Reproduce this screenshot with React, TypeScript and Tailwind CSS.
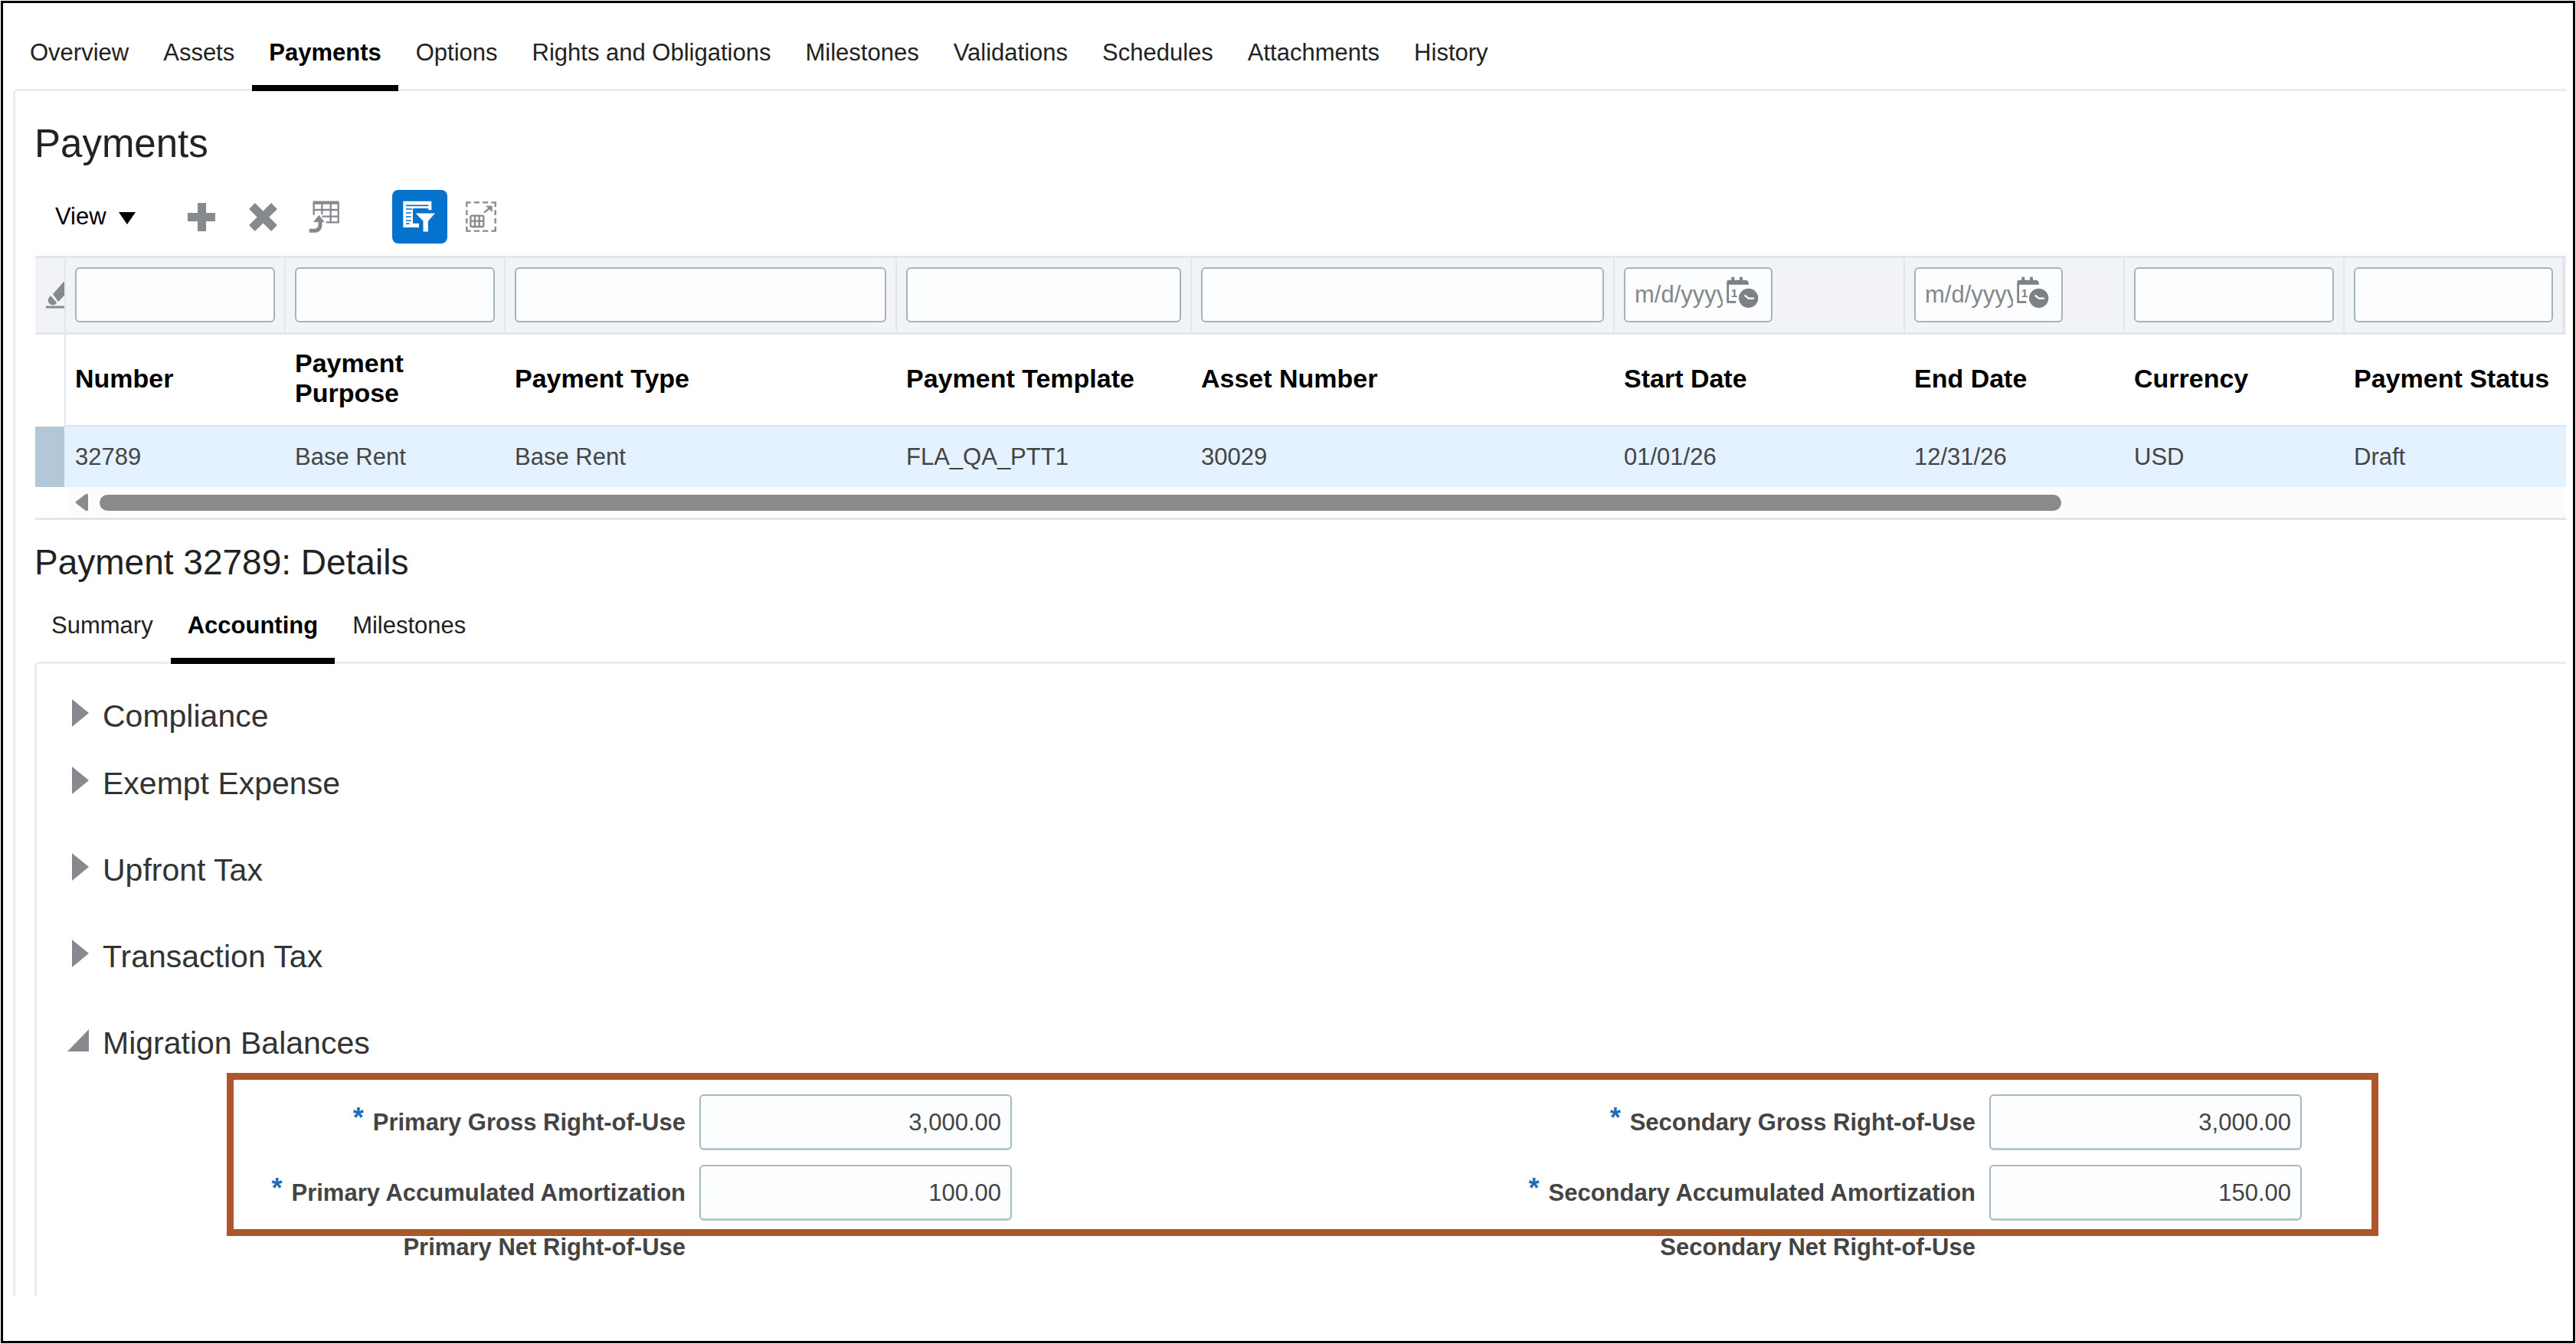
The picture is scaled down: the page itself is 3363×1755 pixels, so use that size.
import { clsx } from "clsx";

const tabs = [
  "Overview",
  "Assets",
  "Payments",
  "Options",
  "Rights and Obligations",
  "Milestones",
  "Validations",
  "Schedules",
  "Attachments",
  "History",
];

const detailTabs = ["Summary", "Accounting", "Milestones"];

const columns = [
  { label: "Number", value: "32789", width: "w-[287px]" },
  { label: "Payment Purpose", value: "Base Rent", width: "w-[287px]" },
  { label: "Payment Type", value: "Base Rent", width: "w-[511px]" },
  { label: "Payment Template", value: "FLA_QA_PTT1", width: "w-[385px]" },
  { label: "Asset Number", value: "30029", width: "w-[552px]" },
  { label: "Start Date", value: "01/01/26", width: "w-[379px]", date: true },
  { label: "End Date", value: "12/31/26", width: "w-[287px]", date: true },
  { label: "Currency", value: "USD", width: "w-[287px]" },
  { label: "Payment Status", value: "Draft", width: "w-[286px]" },
];

const sections = [
  { title: "Compliance", space: "mt-[43px]" },
  { title: "Exempt Expense", space: "mt-[38px]" },
  { title: "Upfront Tax", space: "mt-[63px]" },
  { title: "Transaction Tax", space: "mt-[63px]" },
  { title: "Migration Balances", space: "mt-[63px]", open: true },
];

const balances = [
  { id: "primary-gross", label: "Primary Gross Right-of-Use", value: "3,000.00" },
  { id: "secondary-gross", label: "Secondary Gross Right-of-Use", value: "3,000.00" },
  { id: "primary-amortization", label: "Primary Accumulated Amortization", value: "100.00" },
  { id: "secondary-amortization", label: "Secondary Accumulated Amortization", value: "150.00" },
];

const PlusIcon = () => (
  <svg width="40" height="40" viewBox="0 0 40 40" fill="#868a8e">
    <path d="M15 2h11v13h12v11H26v13H15V26H2V15h13z" />
  </svg>
);

const DeleteIcon = () => (
  <svg width="40" height="40" viewBox="0 0 40 40" stroke="#868a8e" strokeWidth="11">
    <path d="M6 6l29 29M35 6l-29 29" />
  </svg>
);

const DetachRowIcon = () => (
  <svg width="40" height="42" viewBox="0 0 120 126" fill="none" stroke="#868a8e">
    <path d="M17 8h102" strokeWidth="13" />
    <path d="M20 8v48M52 8v46M86 8v76M116 8v79M17 36h102M52 62h67M68 85h51" strokeWidth="7" />
    <path d="M2 118h18q25 0 25-25V78" strokeWidth="15" />
    <path d="M40 56l22 28H18z" fill="#868a8e" stroke="none" />
  </svg>
);

const FilterIcon = () => (
  <svg width="46" height="42" viewBox="0 0 138 126">
    <path d="M4 2h111v35h-12v-6H42v58h24v16H4z" fill="#fff" />
    <path d="M15 19h88M15 33h24M46 33h50M15 48h20M15 63h20M15 78h20M15 90h14" stroke="#0572ce" strokeWidth="5" />
    <path d="M50 48h82L103 80v43H81V80z" fill="#fff" stroke="#0572ce" strokeWidth="3" />
  </svg>
);

const DetachIcon = () => (
  <svg width="40" height="40" viewBox="0 0 120 120" fill="none" stroke="#868a8e" strokeWidth="7">
    <path d="M4 22V4h16M32 4h22M66 4h22M100 4h16v18M116 34v20M116 66v20M116 98v18h-16M88 116H66M54 116H32M20 116H4V98M4 86V66M4 54V34" />
    <rect x="19" y="56" width="51" height="43" rx="6" />
    <path d="M36 56v43M53 56v43M19 77h51M72 44l24-20" />
    <path d="M78 17h26v25z" fill="#868a8e" stroke="none" />
  </svg>
);

const EraserIcon = () => (
  <svg width="24" height="36" viewBox="0 0 24 36" className="ml-auto">
    <path d="M9 16L24-1v19l-8 8z" fill="#868a8e" />
    <path d="M6 18l8 9q-2 4-7 3-5-2-4-8z" fill="#868a8e" />
    <path d="M0 33h24" stroke="#868a8e" strokeWidth="3" />
  </svg>
);

const CalendarIcon = () => (
  <svg width="43" height="42" viewBox="0 0 129 126">
    <path d="M4 32V20q0-6 8-6h10V2h12v12h20V2h12v12h12q12 0 12 18z" fill="#7c8185" />
    <path d="M8 30v70h32" fill="none" stroke="#7c8185" strokeWidth="8" />
    <text x="20" y="80" fill="#7c8185" fontSize="46" fontWeight="700" fontFamily="Liberation Sans, sans-serif">
      1
    </text>
    <circle cx="89" cy="85" r="41" fill="#fcfdff" />
    <circle cx="89" cy="85" r="38" fill="#7c8185" />
    <path d="M74 73l15 13h22" fill="none" stroke="#fff" strokeWidth="7" />
  </svg>
);

const TabBar = ({ items, active, className }: { items: string[]; active: string; className?: string }) => (
  <nav className={clsx("relative z-10 flex gap-px", className)}>
    {items.map((item) => (
      <a
        key={item}
        href="#"
        className={clsx(
          "border-b-8 px-[22px] pb-6 whitespace-nowrap",
          item === active ? "border-black font-bold text-black" : "border-transparent text-[#222]"
        )}
      >
        {item}
      </a>
    ))}
  </nav>
);

const ColumnFilter = ({ label, date }: { label: string; date?: boolean }) => {
  if (date) {
    return (
      <div className="flex h-[72px] w-[194px] items-center rounded-md border-2 border-[#a4b4bc] bg-[#fcfdff] pl-3">
        <input
          aria-label={label}
          placeholder="m/d/yyyy"
          className="w-[115px] bg-transparent outline-none placeholder:text-[#85888b]"
        />
        <button aria-label={`Select ${label}`} className="ml-1 shrink-0 pb-1.5">
          <CalendarIcon />
        </button>
      </div>
    );
  }
  return (
    <input
      aria-label={label}
      className="block h-[72px] w-full rounded-md border-2 border-[#a4b4bc] bg-[#fcfdff] px-3 outline-none"
    />
  );
};

const Toolbar = () => (
  <div className="mt-[30px] flex h-[70px] items-center pl-[27px]">
    <button className="flex items-center gap-4 text-black">
      View
      <svg width="22" height="16" viewBox="0 0 22 16" className="mt-1">
        <path d="M0 0h22L11 16z" />
      </svg>
    </button>
    <div className="ml-[66px] flex items-center gap-10">
      <button aria-label="Add row"><PlusIcon /></button>
      <button aria-label="Delete row"><DeleteIcon /></button>
      <button aria-label="Duplicate row"><DetachRowIcon /></button>
    </div>
    <button
      aria-label="Query by example"
      className="ml-[69px] flex h-full w-[72px] items-center justify-center rounded-lg bg-[#0572ce]"
    >
      <FilterIcon />
    </button>
    <button aria-label="Detach" className="ml-6"><DetachIcon /></button>
  </div>
);

const PaymentsTable = () => (
  <div className="mt-4 ml-px border-b-3 border-[#e1e8ed]">
    <table className="w-full table-fixed border-separate border-spacing-0 text-left">
      <colgroup>
        <col className="w-[38px]" />
        {columns.map((column) => (
          <col key={column.label} className={column.width} />
        ))}
        <col className="w-[5px]" />
      </colgroup>
      <thead>
        <tr className="bg-[#f1f3f7]">
          <td className="border-y-3 border-[#e1e8ed] p-0">
            <button aria-label="Clear filters" className="flex w-full"><EraserIcon /></button>
          </td>
          {columns.map((column) => (
            <td key={column.label} className="border-y-3 border-l-2 border-[#e1e8ed] px-3 pt-3 pb-[13px]">
              <ColumnFilter label={column.label} date={column.date} />
            </td>
          ))}
          <td className="border-y-3 border-l-4 border-[#e1e8ed] p-0"></td>
        </tr>
        <tr className="h-[120px] text-[34px] leading-[39px] text-black">
          <td className="p-0"></td>
          {columns.map((column, i) => (
            <th
              key={column.label}
              scope="col"
              className={clsx(
                "border-b-2 border-l-2 border-b-[#dbe4ea] pt-0 pr-0 pb-1 pl-3 font-bold",
                i === 0 ? "border-l-[#e1e8ed]" : "border-l-transparent"
              )}
            >
              {column.label}
            </th>
          ))}
          <td className="border-b-2 border-[#dbe4ea] p-0"></td>
        </tr>
      </thead>
      <tbody>
        <tr className="h-[79px] bg-[#e4f1ff]">
          <td className="bg-[#b3c7d7] p-0"></td>
          {columns.map((column) => (
            <td key={column.label} className="border-l-2 border-transparent py-0 pr-0 pl-3">
              {column.value}
            </td>
          ))}
          <td className="p-0"></td>
        </tr>
      </tbody>
    </table>

    {/* Horizontal scrollbar */}
    <div className="ml-10 flex h-10 items-center bg-[#fcfcfc] pl-3">
      <svg width="17" height="24" viewBox="0 0 17 24" fill="#8a8a8a">
        <path d="M17 3v18q0 3-3 2L1 13q-1-1 0-2L14 1q3-1 3 2z" />
      </svg>
      <div className="ml-[15px] h-[21px] flex-[2561] rounded-full bg-[#8a8a8a]"></div>
      <div className="flex-[659]"></div>
    </div>
  </div>
);

const MigrationBalances = () => (
  <div className="mt-3.5 mr-[245px] ml-[248px] font-bold text-[#444]">
    <div className="grid grid-cols-[590fr_408px_1240fr_408px] items-center gap-x-[18px] gap-y-[19px] border-9 border-[#ad562c] pt-[19px] pr-[91px] pb-[11px]">
      {balances.map((field) => (
        <div key={field.id} className="contents">
          <label htmlFor={field.id} className="flex items-center justify-end gap-3 whitespace-nowrap">
            <span className="pb-3 text-4xl leading-9 text-[#1f6db3]">*</span>
            {field.label}
          </label>
          <input
            id={field.id}
            required
            defaultValue={field.value}
            className="h-[73px] w-full rounded-md border-2 border-b-3 border-[#a9b8c0] border-b-[#b8c5cb] bg-[#fcfdff] px-3 pt-0.5 text-right font-normal outline-none"
          />
        </div>
      ))}
    </div>
    <div className="grid grid-cols-[590fr_408px_1240fr_408px] gap-x-[18px] pt-px pr-[100px] pl-[9px] text-right leading-7 whitespace-nowrap">
      <span>Primary Net Right-of-Use</span>
      <span></span>
      <span>Secondary Net Right-of-Use</span>
    </div>
  </div>
);

const App = () => {
  return (
    <div className="flex min-h-screen bg-white p-px font-['Liberation_Sans',Arial,sans-serif] text-[31px] leading-9 text-[#444]">
      <div className="flex w-full flex-col border-3 border-black pr-[9px] pb-[59px] pl-[13px]">
        <TabBar items={tabs} active="Payments" className="pt-[47px]" />

        <main className="-mt-[3px] grow rounded-tl-md border-t-3 border-l-3 border-[#e7eef1] pl-[25px]">
          <h1 className="mt-[39px] text-[51px] leading-[60px] text-[#222]">Payments</h1>
          <Toolbar />
          <PaymentsTable />

          <h2 className="mt-[27px] text-[46px] leading-[56px] text-[#222]">Payment 32789: Details</h2>
          <TabBar items={detailTabs} active="Accounting" className="mt-[37px]" />

          <div className="-mt-[3px] rounded-tl-md border-t-3 border-l-3 border-[#e7eef1] pb-[49px]">
            {sections.map((section) => (
              <button
                key={section.title}
                aria-expanded={!!section.open}
                className={clsx("flex items-center pl-10 text-[41px] leading-[50px] text-[#333]", section.space)}
              >
                <svg width="28" height="36" viewBox="0 0 28 36" fill="#868a8e" className="mr-[18px] mb-2">
                  <path d={section.open ? "M28 4v29H0z" : "M6 0l22 18L6 36z"} />
                </svg>
                {section.title}
              </button>
            ))}
            <MigrationBalances />
          </div>
        </main>
      </div>
    </div>
  );
};

export default App;
